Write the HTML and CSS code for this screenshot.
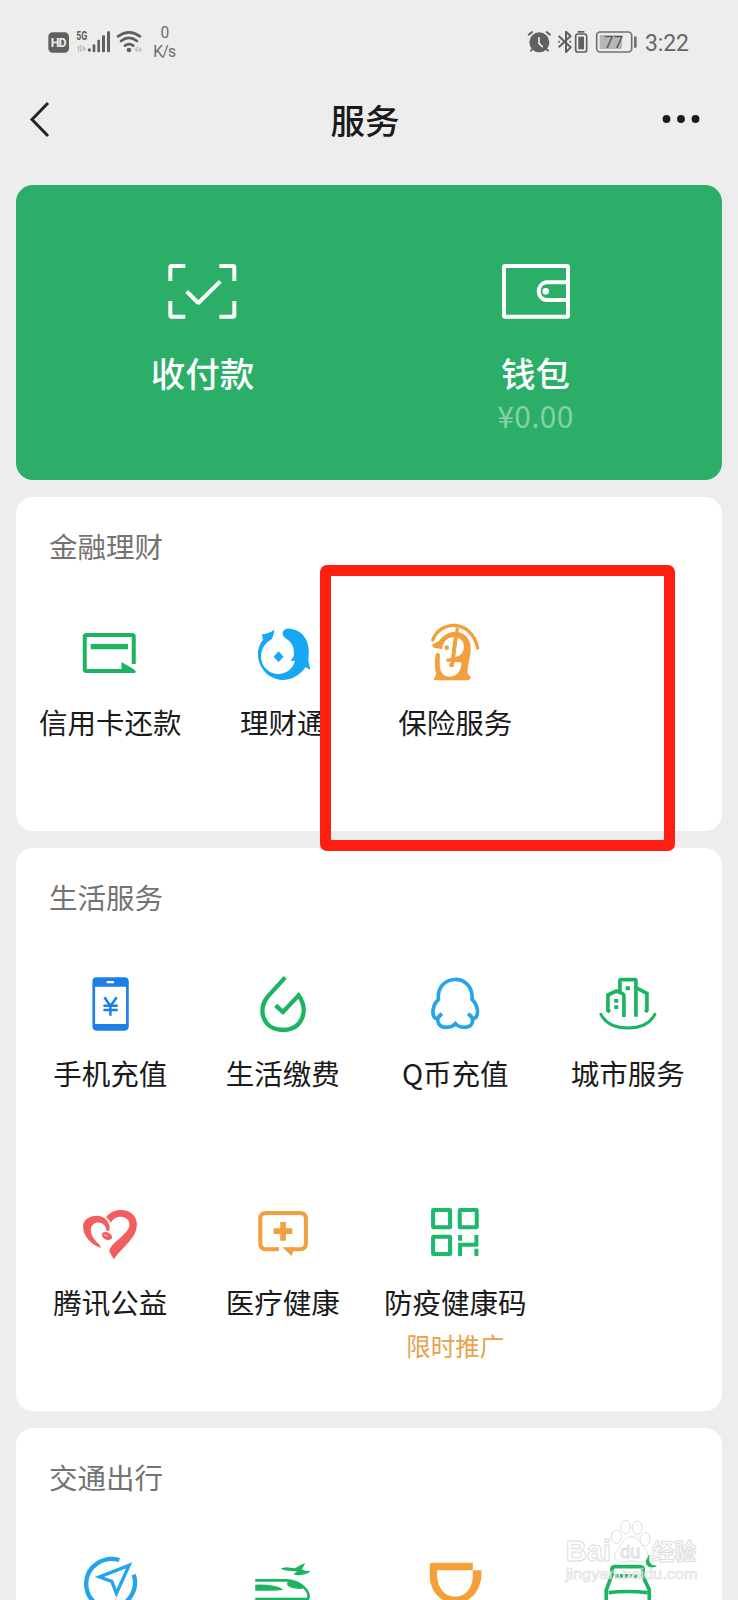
FILE: index.html
```html
<!DOCTYPE html>
<html lang="zh-CN">
<head>
<meta charset="utf-8">
<title>服务</title>
<link rel="stylesheet" href="styles.css">
</head>
<body>
<div class="screen">
  <div class="status">
    <svg class="status-half" viewBox="0 0 1107 240">
      <rect x="145" y="97" width="62" height="61" rx="13" fill="#606060"/>
      <text x="176" y="142" class="st-hd" text-anchor="middle" textLength="47">HD</text>
      <text x="229" y="121" class="st-5g" textLength="33" lengthAdjust="spacingAndGlyphs">5G</text>
      <g fill="#bdbdbd"><path d="M229 145l9-10v20h-4v-10zM240 135h4v20h-4zM248 136l10 10-10 9z"/></g>
      <g fill="#606060"><circle cx="268" cy="150" r="5"/><rect x="278" y="133" width="8" height="24" rx="3"/><rect x="292" y="119" width="8" height="38" rx="3"/><rect x="306" y="106" width="9" height="51" rx="3"/><rect x="321" y="94" width="9" height="63" rx="3"/></g>
      <g fill="none" stroke="#606060" stroke-width="8" stroke-linecap="round"><path d="M354 109q33-24 66 0M363 123q24-19 48 0M375 137q12-9 25 0"/></g>
      <circle cx="387" cy="150" r="7" fill="#606060"/>
      <path d="M402 149l8-9v16h-3v-7zM412 140h3v16h-3zM418 141l9 8-9 8z" fill="#bdbdbd"/>
      <text x="495" y="115" class="st-net" text-anchor="middle">0</text>
      <text x="494" y="171" class="st-net" text-anchor="middle" textLength="69">K/s</text>
    </svg>
    <svg class="status-half" viewBox="0 0 1107 240">
      <circle cx="511" cy="127" r="30" fill="#606060"/>
      <path d="M479 104l10-8M543 104l-10-8M486 152l6-6M537 152l-6-6" stroke="#606060" stroke-width="6" stroke-linecap="round"/>
      <path d="M510 113v17l10 10" fill="none" stroke="#ededed" stroke-width="5" stroke-linecap="round"/>
      <path d="M569 108l36 34-14 14V95l14 13-36 34" fill="none" stroke="#606060" stroke-width="6" stroke-linejoin="round"/>
      <circle cx="570" cy="125" r="3" fill="#606060"/><circle cx="604" cy="125" r="3" fill="#606060"/>
      <rect x="626" y="93" width="20" height="5" fill="#606060"/>
      <rect x="620" y="102" width="33" height="54" rx="7" fill="none" stroke="#606060" stroke-width="5"/>
      <rect x="628" y="110" width="17" height="38" fill="#606060"/>
      <rect x="683" y="96" width="105" height="60" rx="10" fill="none" stroke="#707070" stroke-width="5"/>
      <rect x="692" y="105" width="67" height="42" rx="3" fill="#b7b7b7"/>
      <rect x="795" y="109" width="8" height="35" rx="4" fill="#707070"/>
      <text x="734" y="144" class="st-bat" text-anchor="middle">77</text>
      <text x="828" y="153" class="st-time" textLength="132">3:22</text>
    </svg>
  </div>

  <header class="header">
    <svg class="back" viewBox="0 0 24 40"><path d="M21 4L5 20.500 21 37" fill="none" stroke="#242424" stroke-width="3"/></svg>
    <h1 class="title">服务</h1>
    <svg class="more" viewBox="0 0 40 10" fill="#1a1a1a"><circle cx="5.500" cy="5" r="3.900"/><circle cx="20" cy="5" r="3.900"/><circle cx="34.500" cy="5" r="3.900"/></svg>
  </header>

  <section class="pay">
    <div class="pay-item">
      <svg class="pay-icon" viewBox="80 66 216 176" fill="none" stroke="#fff" stroke-width="12">
        <path d="M90 123V82q0-4 4-4h41M237 78h41q4 0 4 4v41M282 183v43q0 4-4 4h-41M135 230H94q-4 0-4-4v-43M139 154l32 32q3 3 6 0l63-62"/>
      </svg>
      <div class="pay-name">收付款</div>
    </div>
    <div class="pay-item">
      <svg class="pay-icon" viewBox="1080 66 216 176" fill="none" stroke="#fff" stroke-width="12">
        <rect x="1092" y="78" width="192" height="152" rx="3"/>
        <path d="M1284 127h-66a27 27 0 0 0 0 53h66"/>
        <circle cx="1217" cy="154" r="10" fill="#fff" stroke="none"/>
      </svg>
      <div class="pay-name">钱包</div>
      <div class="pay-sum">¥0.00</div>
    </div>
  </section>

  <section class="card card-finance">
    <h2 class="card-title">金融理财</h2>
    <div class="grid">
      <div class="cell">
        <svg class="icon" viewBox="144.75 63 192 192">
          <path d="M312 192v-82q0-5-5-5H170q-5 0-5 5v98q0 5 5 5h140" fill="none" stroke="#1bb562" stroke-width="12"/>
          <path d="M183 132h112v16H183zM275 186l31 18 12 9-2 6h-41z" fill="#1bb562"/>
        </svg>
        <div class="label">信用卡还款</div>
      </div>
      <div class="cell">
        <svg class="icon" viewBox="662.25 63 192 192" fill="#17a7f4">
          <path d="M695 103Q714 102 732 89Q731 111 720 121C690 137 683 182 708 207C737 236 786 220 794 182L781 183L791 168C792 145 788 130 770 118C748 104 756 84 780 86C825 91 842 133 834 180L840 210L826 201C807 230 779 240 757 240C715 238 683 205 683 160C683 145 690 130 698 120Z"/>
          <path d="M745 154l15 16-15 16-15-16z"/>
        </svg>
        <div class="label">理财通</div>
      </div>
      <div class="cell">
        <svg class="icon" viewBox="339.75 198 192 192" fill="#f2a03d">
          <path d="M367 269L388 257C400 239 420 230 440 230C470 233 484 257 483 286C481 315 471 335 474 357L484 367L478 376H371L380 356C373 335 374 315 379 298Z"/>
          <path d="M391 300C387 343 392 365 420 365C445 365 456 342 455 322L410 320V311L424 309L432 247C412 248 400 258 397 283L366 277L368 297ZM442 248C462 252 466 272 460 288Q454 303 436 306Z" fill="#fff"/>
          <path d="M369 255C390 196 484 190 504 279" fill="none" stroke="#f2a03d" stroke-width="10" stroke-linecap="round"/>
          <path d="M443 218L427 334" fill="none" stroke="#f2a03d" stroke-width="10"/>
          <path d="M384 299Q378 328 386 358" fill="none" stroke="#f2a03d" stroke-width="11" stroke-linecap="round"/>
          <circle cx="411" cy="278" r="7"/><circle cx="425" cy="330" r="7"/>
        </svg>
        <div class="label">保险服务</div>
      </div>
    </div>
    <div class="highlight"></div>
  </section>

  <section class="card card-life">
    <h2 class="card-title">生活服务</h2>
    <div class="grid">
      <div class="cell">
        <svg class="icon" viewBox="144.75 66 192 192">
          <path fill-rule="evenodd" d="M201 82h83q13 0 13 13v134q0 13-13 13h-83q-13 0-13-13V95q0-13 13-13zM196 110v112h93V110zM231 93v7h22v-7z" fill="#1c7fe8"/>
          <path d="M224 142l18 26 19-26M242 166v31M221 167h43M221 180h43" fill="none" stroke="#1c7fe8" stroke-width="7.500"/>
        </svg>
        <div class="label">手机充值</div>
      </div>
      <div class="cell">
        <svg class="icon" viewBox="662.25 66 192 192">
          <path d="M765 82L715 137C680 174 695 239 758 240C814 240 838 184 805 136L758 186L736 166" fill="none" stroke="#1bb562" stroke-width="13"/>
        </svg>
        <div class="label">生活缴费</div>
      </div>
      <div class="cell">
        <svg class="icon" viewBox="159.750 66 192 192">
          <path d="M216 190L209 199Q203 207 196 204C185 195 188 165 206 148C199 70 312 67 307 148C325 165 328 195 316 204Q309 207 303 199L295 191M211 195Q199 208 207 221C217 237 245 234 257 221C268 234 298 237 306 221Q313 208 301 195" fill="none" stroke="#23a5e9" stroke-width="11"/>
        </svg>
        <div class="label">Q币充值</div>
      </div>
      <div class="cell">
        <svg class="icon" viewBox="677.250 66 192 192">
          <path d="M719 186l-6-5v-46l25-12 19 8q4 2 4 7v63M749 124V92q0-3 3-3h42q3 0 3 3v108M797 113l33 17v51l-5 5" fill="none" stroke="#1bb562" stroke-width="11"/>
          <path d="M692 193Q713 234 773 234Q832 234 854 193" fill="none" stroke="#1bb562" stroke-width="9" stroke-linecap="round"/>
          <path d="M766 109h13v12h-13zM732 147h12v11h-12zM732 166h12v11h-12z" fill="#1bb562"/>
        </svg>
        <div class="label">城市服务</div>
      </div>
      <div class="cell">
        <svg class="icon" viewBox="144.75 33 192 192" fill="#f25d60">
          <path d="M214 174C185 165 158 139 160 106C164 75 214 66 233 93Q242 106 239 122L230 123C229 98 204 91 191 103C173 118 190 149 208 163Z"/>
          <path d="M229 82C253 48 316 54 321 98C325 143 279 168 252 208L239 185C239 162 283 143 298 112C305 89 282 74 258 83Q247 89 242 99Q237 87 229 82Z"/>
          <path d="M219 128C229 123 246 130 247 142C246 155 221 151 217 137Q214 131 219 128Z"/>
          <path d="M222 134l13 5" stroke="#fff" stroke-width="2"/>
        </svg>
        <div class="label">腾讯公益</div>
      </div>
      <div class="cell">
        <svg class="icon" viewBox="662.25 33 192 192">
          <path d="M744 178h-36q-18 0-18-18V87q0-18 18-18h101q18 0 18 18v73q0 18-18 18h-30" fill="none" stroke="#f2a03d" stroke-width="12"/>
          <path d="M750 96h17v19h19v17h-19v20h-17v-20h-20v-17h20zM757 172h35l-8 27zM736 172l10 12v-12z" fill="#f2a03d"/>
        </svg>
        <div class="label">医疗健康</div>
      </div>
      <div class="cell">
        <svg class="icon" viewBox="189.750 33 192 192">
          <g fill="none" stroke="#1bb96b" stroke-width="12"><rect x="220" y="60" width="51" height="52" rx="1"/><rect x="300" y="60" width="51" height="52" rx="1"/><rect x="220" y="140" width="51" height="52" rx="1"/><path d="M301 135v17M301 198v-34M350 135v34M350 176v22M295 164h60"/></g>
        </svg>
        <div class="label">防疫健康码</div>
        <div class="promo">限时推广</div>
      </div>
    </div>
  </section>

  <section class="card card-travel">
    <h2 class="card-title">交通出行</h2>
    <div class="grid">
      <div class="cell">
        <svg class="icon" viewBox="234.75 456 192 192" fill="none" stroke="#23a5ee">
          <path d="M359 480C314 467 260 496 259 551C260 597 294 624 332 624C381 622 418 573 402 524" stroke-width="13"/>
          <path d="M388 496L299 531L336 544L350 580Z" stroke-width="10"/>
        </svg>
      </div>
      <div class="cell">
        <svg class="icon" viewBox="752.25 456 192 192">
          <path d="M765 541H860C905 544 932 578 923 597H765" fill="none" stroke="#1bb562" stroke-width="8"/>
          <path d="M765 554Q825 552 849 569Q835 573 765 572zM864 541Q898 546 908 567Q864 567 860 553zM841 505l16-3 27 3 18-11 13-4-10 18 11 5 14-1q-4 8-16 11-26 6-34-1l11-8q-42 0-50-9z" fill="#1bb562"/>
        </svg>
      </div>
      <div class="cell">
        <svg class="icon" viewBox="162.750 216 192 192">
          <path d="M183 254q0-6 6-6h123v23h26v18C333 339 301 370 260 370S185 337 183 290zM205 271v20C210 329 228 350 260 350S311 322 312 291V271z" fill="#f59f38" fill-rule="evenodd"/>
        </svg>
      </div>
      <div class="cell">
        <svg class="icon" viewBox="680.250 216 192 192">
          <path d="M711 370V331L728 284V266Q729 260 737 260H813Q821 261 822 268L820 286L840 329V370M718 338Q775 331 834 338" fill="none" stroke="#1bb562" stroke-width="11"/>
          <path d="M737 282h11v11h-11zM752 282h10v11h-10zM766 282h10v7l-5 5h-5zM780 282h10l-4 11h-6zM794 282h10v11h-10zM842 224C824 231 825 265 851 262Q861 262 862 256C844 258 835 243 842 224Z" fill="#1bb562"/>
        </svg>
      </div>
    </div>
  </section>

  <svg class="watermark" viewBox="570 100 440 220" fill="#fff" stroke="#d6d6d6" stroke-width="3">
    <text x="590" y="245" class="wm-main" textLength="136" lengthAdjust="spacingAndGlyphs">Bai</text>
    <ellipse cx="742" cy="171" rx="15" ry="20"/><ellipse cx="770" cy="142" rx="15" ry="20"/><ellipse cx="805" cy="144" rx="15" ry="20"/><ellipse cx="828" cy="179" rx="15" ry="20"/>
    <path d="M786 171C810 171 817 198 832 213C847 235 825 253 805 246Q786 241 768 246C742 253 727 229 744 212C756 200 763 172 786 171Z"/>
    <text x="784" y="235" class="wm-du" text-anchor="middle">du</text>
    <text x="848" y="241" class="wm-cn" textLength="134">经验</text>
    <text x="590" y="298" class="wm-url" textLength="396" lengthAdjust="spacingAndGlyphs">jingyan.baidu.com</text>
  </svg>
</div>
</body>
</html>
```
FILE: styles.css
```css
* { box-sizing: border-box; }
body {
  margin: 0;
  background: #ededed;
  color: #1a1a1a;
  font-family: "Noto Sans CJK SC", sans-serif;
}
.screen {
  position: relative;
  width: 738px;
  height: 1600px;
  overflow: hidden;
}
.status { display: flex; height: 80px; }
.status-half { width: 369px; height: 80px; }
.st-hd { font: 700 37px Roboto, sans-serif; fill: #ededed; }
.st-5g { font: 700 36px Roboto, sans-serif; fill: #606060; }
.st-net { font: 400 47px Roboto, sans-serif; fill: #6b6b6b; }
.st-bat { font: 400 51px Roboto, sans-serif; fill: #555; }
.st-time { font: 400 69px Roboto, sans-serif; fill: #666; }

.header {
  display: grid;
  grid-template-columns: 100px 1fr 100px;
  align-items: center;
  height: 80px;
  padding: 0 37px 0 27px;
  margin-bottom: 25px;
}
.back { width: 24px; height: 40px; margin-top: -3px; }
.title {
  margin: 0;
  padding-left: 2px;
  font-size: 34.5px;
  font-weight: 500;
  line-height: 78px;
  height: 80px;
  text-align: center;
}
.more { width: 40px; height: 10px; justify-self: end; margin-top: -2px; }

.pay {
  display: grid;
  grid-template-columns: 1fr 1fr;
  height: 295px;
  margin: 0 16px 17px;
  padding: 77px 20px 0;
  border-radius: 17px;
  background: #2bae67;
  color: #fff;
  text-align: center;
}
.pay-icon { display: block; width: 72px; height: 58.67px; margin: 0 auto; }
.pay-name {
  margin-top: 26px;
  font-size: 34.5px;
  font-weight: 500;
  line-height: 50px;
}
.pay-sum {
  margin-top: 0;
  font-size: 30px;
  line-height: 36px;
  letter-spacing: .3px;
  color: #85d0a8;
}

.card {
  position: relative;
  margin: 0 16px 17px;
  padding: 0 8px;
  border-radius: 17px;
  background: #fff;
}
.card-finance { height: 334px; }
.card-life { height: 563px; }
.card-travel { height: 190px; margin-bottom: 0; }
.card-title {
  margin: 0;
  padding-left: 25px;
  font-size: 28.5px;
  font-weight: 400;
  line-height: 98px;
  height: 124px;
  color: #737373;
}
.grid { display: grid; grid-template-columns: repeat(4, 1fr); grid-auto-rows: 229px; }
.cell { text-align: center; }
.icon { display: block; width: 64px; height: 64px; margin: 0 auto; }
.label {
  margin-top: 15.5px;
  font-size: 28.5px;
  line-height: 42px;
  white-space: nowrap;
}
.promo {
  margin-top: 5px;
  font-size: 24.5px;
  line-height: 36px;
  color: #eba04b;
}

/* Marker frame drawn over the insurance entry */
.highlight {
  position: absolute;
  z-index: 2;
  left: 304px;
  top: 68px;
  width: 355px;
  height: 286px;
  border: 11.5px solid #ff1f12;
  border-radius: 7px;
}

.watermark {
  position: absolute;
  left: 559px;
  top: 1513.33px;
  width: 146.67px;
  height: 73.33px;
  opacity: .8;
}
.wm-main { font: 700 91px "Liberation Sans", sans-serif; }
.wm-du { font: 400 54px "Liberation Sans", sans-serif; }
.wm-cn { font: 700 67px "Noto Sans CJK SC", sans-serif; }
.wm-url { font: 400 44px "Liberation Sans", sans-serif; stroke-width: 2px; }
```
